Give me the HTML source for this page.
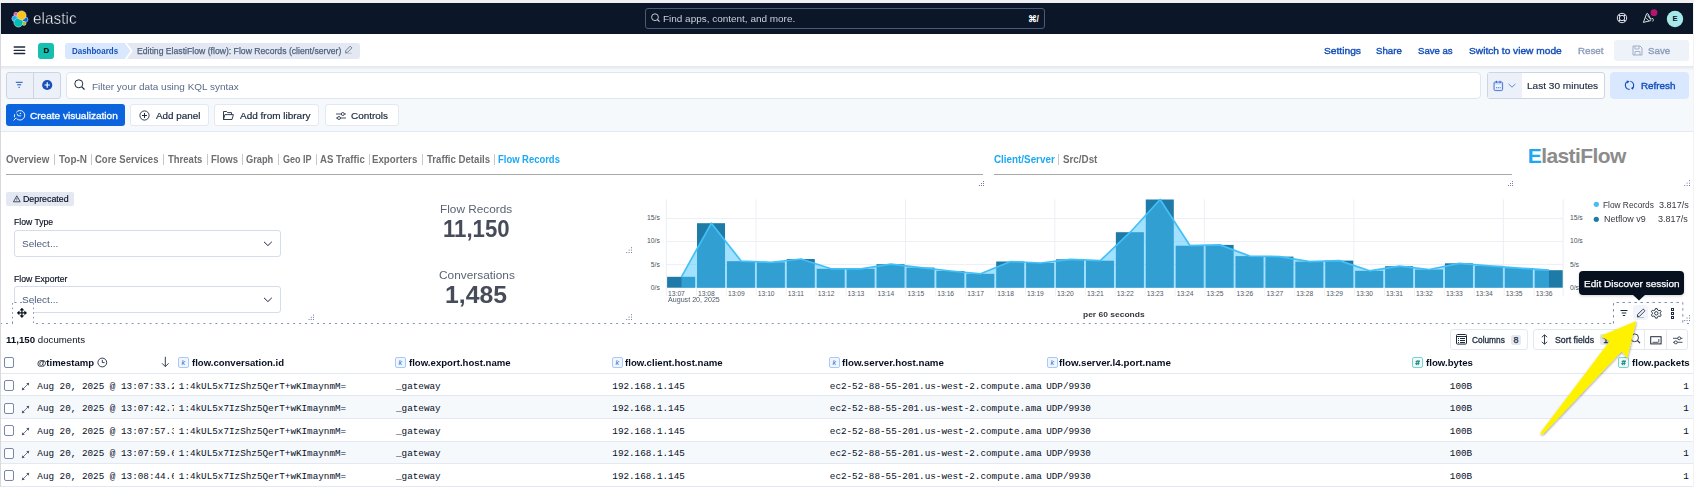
<!DOCTYPE html>
<html><head><meta charset="utf-8">
<style>
*{box-sizing:border-box;margin:0;padding:0}
html,body{width:1694px;height:487px;overflow:hidden;background:#fff;font-family:"Liberation Sans",sans-serif;color:#07101f;position:relative}
.a{position:absolute;white-space:nowrap}
</style></head><body>
<div class="a" style="left:0.00px;top:0.00px;width:1694.00px;height:487.00px;background:#fff"></div>
<div class="a" style="left:0.00px;top:0.00px;width:1694.00px;height:3.00px;background:#f0f0f3"></div>
<div class="a" style="left:1.00px;top:3.00px;width:1692.00px;height:31.00px;background:#0b1628"></div>
<svg class="a" style="left:0px;top:0px;overflow:visible" width="40" height="40" viewBox="0 0 40 40">
<g stroke="#e6ebf2" stroke-width=".55">
<circle cx="15.9" cy="14.3" r="2" fill="#f04e98"/>
<circle cx="14.8" cy="18.6" r="2.9" fill="#1ba9f5"/>
<circle cx="25.1" cy="19.6" r="2.8" fill="#0b64dd"/>
<circle cx="24" cy="23.4" r="2" fill="#93c90e"/>
<circle cx="18.4" cy="22.5" r="4.5" fill="#00bfb3"/>
<circle cx="21.6" cy="15.4" r="4.5" fill="#fec514"/></g></svg>
<div class="a" id="t1" style="left:32.68px;top:10.43px;font-size:16.5px;line-height:16.5px;color:#fff;font-weight:normal;font-family:'Liberation Sans';transform:scaleX(0.9318);transform-origin:0 0;-webkit-text-stroke:0.45px #0b1628">elastic</div>
<div class="a" style="left:645.00px;top:8.00px;width:400.00px;height:21.00px;border:1px solid #4b5a77;border-radius:3px;background:#0b1628"></div>
<svg class="a" style="left:650.5px;top:13px;overflow:visible" width="10" height="10" viewBox="0 0 10 10"><circle cx="4" cy="4.2" r="3.4" fill="none" stroke="#dfe5ef" stroke-width=".85"/><path d="M6.5 6.7 L8.5 8.7" stroke="#dfe5ef" stroke-width="1.1"/></svg>
<div class="a" id="t2" style="left:662.91px;top:13.67px;font-size:9.6px;line-height:9.6px;color:#c8d0dc;font-weight:normal;font-family:'Liberation Sans';transform:scaleX(1.0371);transform-origin:0 0">Find apps, content, and more.</div>
<div class="a" style="left:1027.50px;top:15.20px;font-size:8.5px;line-height:8.5px;color:#fff;font-weight:bold;font-family:'Liberation Sans'">&#8984;/</div>
<svg class="a" style="left:1616px;top:12.4px;overflow:visible" width="12" height="12" viewBox="0 0 12 12"><circle cx="6" cy="6" r="4.7" fill="none" stroke="#e8ecf2" stroke-width=".95"/><circle cx="6" cy="6" r="2.7" fill="none" stroke="#e8ecf2" stroke-width=".95"/><path d="M2.6 2.6L4.1 4.1M9.4 2.6L7.9 4.1M2.6 9.4L4.1 7.9M9.4 9.4L7.9 7.9" stroke="#e8ecf2" stroke-width="1.3"/></svg>
<svg class="a" style="left:1640px;top:10px;overflow:visible" width="16" height="16" viewBox="0 0 16 16"><path d="M3.4 12.4 L6.6 3.8 Q7.3 3 8 3.9 L10.9 9.6 Q11.2 10.4 10.4 10.7 Z" fill="none" stroke="#e8ecf2" stroke-width=".95" stroke-linejoin="round"/><path d="M5.3 7.6 L9.2 11 M7.4 5.5 L10.2 8.8" stroke="#e8ecf2" stroke-width=".8"/><path d="M11.5 8.4 Q13.2 8 13.3 9.6 Q13.4 11 12.6 11.5" fill="none" stroke="#e8ecf2" stroke-width=".9"/></svg>
<svg class="a" style="left:1650px;top:9px;overflow:visible" width="8" height="8" viewBox="0 0 8 8"><circle cx="4" cy="3.7" r="3.4" fill="#b3166f"/></svg>
<svg class="a" style="left:1666px;top:10px;overflow:visible" width="18" height="18" viewBox="0 0 18 18"><circle cx="9" cy="9" r="8.2" fill="#a6e9e8"/></svg>
<div class="a" style="left:1672.60px;top:15.27px;font-size:7.6px;line-height:7.6px;color:#07101f;font-weight:bold;font-family:'Liberation Sans'">E</div>
<div class="a" style="left:1.00px;top:34.00px;width:1692.00px;height:32.00px;background:#fff"></div>
<div class="a" style="left:1.00px;top:66.00px;width:1692.00px;height:1.00px;background:#e3e8f2"></div>
<svg class="a" style="left:0px;top:0px;overflow:visible" width="40" height="70" viewBox="0 0 40 70"><path d="M14.2 47H24.7M14.2 50.4H24.7M14.2 53.5H24.7" stroke="#1d2a3e" stroke-width="1.3" stroke-linecap="round"/></svg>
<div class="a" style="left:38.00px;top:43.00px;width:16.00px;height:16.00px;background:#17bfb0;border-radius:3px"></div>
<div class="a" style="left:43.40px;top:47.13px;font-size:8px;line-height:8px;color:#000;font-weight:bold;font-family:'Liberation Sans'">D</div>
<svg class="a" style="left:65px;top:43px;overflow:visible" width="296" height="16" viewBox="0 0 296 16"><path d="M3 0 H59.7 L65.6 8 L59.7 16 H3 Q0 16 0 13 V3 Q0 0 3 0Z" fill="#d9e8ff"/><path d="M61.8 0 H292 Q295 0 295 3 V13 Q295 16 292 16 H61.8 L67.7 8 Z" fill="#e3e8f2"/></svg>
<div class="a" id="t3" style="left:72.34px;top:46.51px;font-size:9.2px;line-height:9.2px;color:#1750ba;font-weight:bold;font-family:'Liberation Sans';transform:scaleX(0.8676);transform-origin:0 0">Dashboards</div>
<div class="a" id="t4" style="left:136.81px;top:46.51px;font-size:9.2px;line-height:9.2px;color:#4d5f7e;font-weight:normal;font-family:'Liberation Sans';transform:scaleX(0.9415);transform-origin:0 0;-webkit-text-stroke:0.25px #4d5f7e">Editing ElastiFlow (flow): Flow Records (client/server)</div>
<svg class="a" style="left:344px;top:45px;overflow:visible" width="9" height="9" viewBox="0 0 9 9"><path d="M1.5 7.5 L1.8 5.6 L6.2 1.2 L7.9 2.9 L3.5 7.3 Z" fill="none" stroke="#516381" stroke-width=".8"/><path d="M1 8.3 H7.5" stroke="#98a2b3" stroke-width=".6"/></svg>
<div class="a" id="t5" style="left:1323.68px;top:45.87px;font-size:9.6px;line-height:9.6px;color:#1750ba;font-weight:normal;font-family:'Liberation Sans';transform:scaleX(1.0666);transform-origin:0 0;-webkit-text-stroke:0.4px #1750ba">Settings</div>
<div class="a" id="t6" style="left:1376.45px;top:45.87px;font-size:9.6px;line-height:9.6px;color:#1750ba;font-weight:normal;font-family:'Liberation Sans';transform:scaleX(1.0065);transform-origin:0 0;-webkit-text-stroke:0.4px #1750ba">Share</div>
<div class="a" id="t7" style="left:1418.27px;top:45.87px;font-size:9.6px;line-height:9.6px;color:#1750ba;font-weight:normal;font-family:'Liberation Sans';transform:scaleX(0.9991);transform-origin:0 0;-webkit-text-stroke:0.4px #1750ba">Save as</div>
<div class="a" id="t8" style="left:1469.47px;top:45.87px;font-size:9.6px;line-height:9.6px;color:#1750ba;font-weight:normal;font-family:'Liberation Sans';transform:scaleX(1.0607);transform-origin:0 0;-webkit-text-stroke:0.4px #1750ba">Switch to view mode</div>
<div class="a" id="t9" style="left:1577.63px;top:45.87px;font-size:9.6px;line-height:9.6px;color:#8e9fbc;font-weight:normal;font-family:'Liberation Sans';transform:scaleX(1.0175);transform-origin:0 0;-webkit-text-stroke:0.4px #8e9fbc">Reset</div>
<div class="a" style="left:1614.00px;top:40.00px;width:75.00px;height:21.00px;background:#eef2f9;border-radius:3px"></div>
<svg class="a" style="left:1632px;top:45px;overflow:visible" width="11" height="11" viewBox="0 0 11 11"><path d="M1 1 H8 L10 3 V10 H1 Z" fill="none" stroke="#a2afc6" stroke-width="1"/><path d="M3 1 V4 H7 V1 M3 10 V6.5 H8 V10" fill="none" stroke="#a2afc6" stroke-width=".9"/></svg>
<div class="a" id="t10" style="left:1647.98px;top:45.87px;font-size:9.6px;line-height:9.6px;color:#8e9fbc;font-weight:normal;font-family:'Liberation Sans';transform:scaleX(1.0150);transform-origin:0 0;-webkit-text-stroke:0.4px #8e9fbc">Save</div>
<div class="a" style="left:1.00px;top:67.00px;width:1692.00px;height:65.00px;background:#f6f9fc"></div>
<div class="a" style="left:1.00px;top:131.00px;width:1692.00px;height:1.00px;background:#e3e8f2"></div>
<div class="a" style="left:1.00px;top:67.00px;width:1692.00px;height:3.00px;background:linear-gradient(#e6e8ec,#f6f9fc)"></div>
<div class="a" style="left:6.00px;top:72.00px;width:55.00px;height:27.00px;background:#ecf0f8;border:1px solid #cdd5e4;border-radius:3px"></div>
<div class="a" style="left:33.00px;top:73.00px;width:1.00px;height:25.00px;background:#cdd5e4"></div>
<svg class="a" style="left:15px;top:81px;overflow:visible" width="9" height="8" viewBox="0 0 9 8"><path d="M0.8 1.3H7.6M2.2 3.8H6.2M3.5 6.3H4.9" stroke="#1750ba" stroke-width="1"/></svg>
<svg class="a" style="left:41.5px;top:80px;overflow:visible" width="11" height="11" viewBox="0 0 11 11"><circle cx="5.2" cy="5" r="5.1" fill="#1750ba"/><path d="M5.2 2.3V7.7M2.5 5H7.9" stroke="#fff" stroke-width="1.2"/></svg>
<div class="a" style="left:66.00px;top:72.00px;width:1415.00px;height:27.00px;background:#fff;border:1px solid #e0e6f0;border-radius:4px"></div>
<svg class="a" style="left:73.5px;top:79px;overflow:visible" width="12" height="12" viewBox="0 0 12 12"><circle cx="4.8" cy="4.8" r="4" fill="none" stroke="#1d2a3e" stroke-width="1"/><path d="M7.8 7.8 L10.5 10.5" stroke="#1d2a3e" stroke-width="1.2"/></svg>
<div class="a" id="t11" style="left:91.72px;top:81.70px;font-size:9.8px;line-height:9.8px;color:#5a6b87;font-weight:normal;font-family:'Liberation Sans';transform:scaleX(1.0155);transform-origin:0 0">Filter your data using KQL syntax</div>
<div class="a" style="left:1487.00px;top:72.00px;width:118.00px;height:27.00px;background:#fff;border:1px solid #cdd5e4;border-radius:3px"></div>
<div class="a" style="left:1488.00px;top:73.00px;width:34.00px;height:25.00px;background:#ecf0f8"></div>
<svg class="a" style="left:1492px;top:79px;overflow:visible" width="12" height="13" viewBox="0 0 12 13"><rect x="2" y="3" width="8.6" height="8.6" rx="1.2" fill="#c9d8f4" stroke="#3b6fd0" stroke-width=".9"/><rect x="3" y="5.6" width="6.6" height="5" fill="#f0f4fb"/><path d="M4.4 1.8V4M8.1 1.8V4" stroke="#3b6fd0" stroke-width="1.1"/><path d="M4 8.8h1.1M5.8 8.8h1.1M7.6 8.8h1.1" stroke="#3b6fd0" stroke-width="1.1"/></svg>
<svg class="a" style="left:1507.5px;top:83px;overflow:visible" width="9" height="6" viewBox="0 0 9 6"><path d="M.6 1 L4 4.2 L7.4 1" fill="none" stroke="#3a6fd0" stroke-width=".8"/></svg>
<div class="a" id="t12" style="left:1527.30px;top:80.90px;font-size:9.8px;line-height:9.8px;color:#1d2a3e;font-weight:normal;font-family:'Liberation Sans';transform:scaleX(1.0281);transform-origin:0 0;-webkit-text-stroke:0.15px #1d2a3e">Last 30 minutes</div>
<div class="a" style="left:1610.00px;top:72.00px;width:79.00px;height:27.00px;background:#d9e8ff;border-radius:4px"></div>
<svg class="a" style="left:1624px;top:80px;overflow:visible" width="12" height="12" viewBox="0 0 12 12"><path d="M4.6 1.3 A4.1 4.1 0 0 0 5.6 9.4" fill="none" stroke="#1750ba" stroke-width="1.15"/><path d="M6.4 1.2 A4.1 4.1 0 0 1 8.2 8.4" fill="none" stroke="#1750ba" stroke-width="1.15" stroke-dasharray="0"/><path d="M2.6 .6L5.6 1.3 3.3 3.4Z M9.9 6.9L8.9 9.7 6.8 7.9Z" fill="#1750ba"/></svg>
<div class="a" id="t13" style="left:1640.54px;top:80.90px;font-size:9.8px;line-height:9.8px;color:#1750ba;font-weight:normal;font-family:'Liberation Sans';transform:scaleX(1.0051);transform-origin:0 0;-webkit-text-stroke:0.4px #1750ba">Refresh</div>
<div class="a" style="left:6.00px;top:104.00px;width:119.00px;height:22.00px;background:#0b64dd;border-radius:3px"></div>
<svg class="a" style="left:11.8px;top:109px;overflow:visible" width="14" height="14" viewBox="0 0 14 14"><path d="M4.3 3.3 A4.75 4.75 0 1 1 4.6 9.6" fill="none" stroke="#fff" stroke-width=".9"/><path d="M4.9 4.6 Q5.2 7.6 8.3 6.9 L9.2 6.3" fill="none" stroke="#fff" stroke-width=".9"/><path d="M1.5 11.5 L4.2 8.8 M2.6 5.2 L2.4 8.3" stroke="#fff" stroke-width=".9"/><circle cx="8.4" cy="4.4" r=".7" fill="#fff"/></svg>
<div class="a" id="t14" style="left:29.73px;top:111.10px;font-size:9.8px;line-height:9.8px;color:#fff;font-weight:normal;font-family:'Liberation Sans';transform:scaleX(1.0260);transform-origin:0 0;-webkit-text-stroke:0.3px #fff">Create visualization</div>
<div class="a" style="left:130.00px;top:104.00px;width:79.00px;height:22.00px;background:#fff;border:1px solid #e3e8f2;border-radius:3px"></div>
<div class="a" id="t15" style="left:155.66px;top:111.10px;font-size:9.8px;line-height:9.8px;color:#1d2a3e;font-weight:normal;font-family:'Liberation Sans';transform:scaleX(1.0045);transform-origin:0 0;-webkit-text-stroke:0.2px #1d2a3e">Add panel</div>
<div class="a" style="left:214.00px;top:104.00px;width:105.00px;height:22.00px;background:#fff;border:1px solid #e3e8f2;border-radius:3px"></div>
<div class="a" id="t16" style="left:239.74px;top:111.10px;font-size:9.8px;line-height:9.8px;color:#1d2a3e;font-weight:normal;font-family:'Liberation Sans';transform:scaleX(1.0192);transform-origin:0 0;-webkit-text-stroke:0.2px #1d2a3e">Add from library</div>
<div class="a" style="left:325.00px;top:104.00px;width:74.00px;height:22.00px;background:#fff;border:1px solid #e3e8f2;border-radius:3px"></div>
<div class="a" id="t17" style="left:351.30px;top:111.10px;font-size:9.8px;line-height:9.8px;color:#1d2a3e;font-weight:normal;font-family:'Liberation Sans';transform:scaleX(1.0123);transform-origin:0 0;-webkit-text-stroke:0.2px #1d2a3e">Controls</div>
<svg class="a" style="left:139px;top:110px;overflow:visible" width="11" height="11" viewBox="0 0 11 11"><circle cx="5.5" cy="5.5" r="4.6" fill="none" stroke="#1d2a3e" stroke-width=".9"/><path d="M5.5 3V8M3 5.5H8" stroke="#1d2a3e" stroke-width="1"/></svg>
<svg class="a" style="left:222px;top:109.5px;overflow:visible" width="13" height="12" viewBox="0 0 13 12"><path d="M1.5 9.5 V1.5 H4.6 L5.6 2.6 H9.5 V4.6" fill="none" stroke="#1d2a3e" stroke-width=".9" stroke-linejoin="round"/><path d="M1.5 9.5 L2.9 4.6 H11.4 L10 9.5 Z" fill="none" stroke="#1d2a3e" stroke-width=".9" stroke-linejoin="round"/></svg>
<svg class="a" style="left:334.5px;top:110.5px;overflow:visible" width="12" height="10" viewBox="0 0 12 10"><path d="M1 3 H11 M1 7 H11" stroke="#1d2a3e" stroke-width=".8"/><circle cx="7.8" cy="3" r="1.5" fill="#fff" stroke="#1d2a3e" stroke-width=".8"/><circle cx="4" cy="7" r="1.5" fill="#fff" stroke="#1d2a3e" stroke-width=".8"/></svg>
<div class="a" id="t18" style="left:6.36px;top:154.84px;font-size:10px;line-height:10px;color:#6e6f73;font-weight:bold;font-family:'Liberation Sans';transform:scaleX(0.9719);transform-origin:0 0">Overview</div>
<div class="a" style="left:54.00px;top:154.00px;width:1.00px;height:11.00px;background:#c8c8c8"></div>
<div class="a" id="t19" style="left:58.79px;top:154.84px;font-size:10px;line-height:10px;color:#6e6f73;font-weight:bold;font-family:'Liberation Sans';transform:scaleX(0.9943);transform-origin:0 0">Top-N</div>
<div class="a" style="left:91.00px;top:154.00px;width:1.00px;height:11.00px;background:#c8c8c8"></div>
<div class="a" id="t20" style="left:95.25px;top:154.84px;font-size:10px;line-height:10px;color:#6e6f73;font-weight:bold;font-family:'Liberation Sans';transform:scaleX(0.9506);transform-origin:0 0">Core Services</div>
<div class="a" style="left:163.00px;top:154.00px;width:1.00px;height:11.00px;background:#c8c8c8"></div>
<div class="a" id="t21" style="left:167.91px;top:154.84px;font-size:10px;line-height:10px;color:#6e6f73;font-weight:bold;font-family:'Liberation Sans';transform:scaleX(0.9509);transform-origin:0 0">Threats</div>
<div class="a" style="left:207.00px;top:154.00px;width:1.00px;height:11.00px;background:#c8c8c8"></div>
<div class="a" id="t22" style="left:210.70px;top:154.84px;font-size:10px;line-height:10px;color:#6e6f73;font-weight:bold;font-family:'Liberation Sans';transform:scaleX(0.9511);transform-origin:0 0">Flows</div>
<div class="a" style="left:242.00px;top:154.00px;width:1.00px;height:11.00px;background:#c8c8c8"></div>
<div class="a" id="t23" style="left:246.21px;top:154.84px;font-size:10px;line-height:10px;color:#6e6f73;font-weight:bold;font-family:'Liberation Sans';transform:scaleX(0.9263);transform-origin:0 0">Graph</div>
<div class="a" style="left:278.00px;top:154.00px;width:1.00px;height:11.00px;background:#c8c8c8"></div>
<div class="a" id="t24" style="left:282.59px;top:154.84px;font-size:10px;line-height:10px;color:#6e6f73;font-weight:bold;font-family:'Liberation Sans';transform:scaleX(0.9048);transform-origin:0 0">Geo IP</div>
<div class="a" style="left:316.00px;top:154.00px;width:1.00px;height:11.00px;background:#c8c8c8"></div>
<div class="a" id="t25" style="left:320.08px;top:154.84px;font-size:10px;line-height:10px;color:#6e6f73;font-weight:bold;font-family:'Liberation Sans';transform:scaleX(0.9584);transform-origin:0 0">AS Traffic</div>
<div class="a" style="left:369.00px;top:154.00px;width:1.00px;height:11.00px;background:#c8c8c8"></div>
<div class="a" id="t26" style="left:372.49px;top:154.84px;font-size:10px;line-height:10px;color:#6e6f73;font-weight:bold;font-family:'Liberation Sans';transform:scaleX(0.9697);transform-origin:0 0">Exporters</div>
<div class="a" style="left:422.00px;top:154.00px;width:1.00px;height:11.00px;background:#c8c8c8"></div>
<div class="a" id="t27" style="left:426.71px;top:154.84px;font-size:10px;line-height:10px;color:#6e6f73;font-weight:bold;font-family:'Liberation Sans';transform:scaleX(0.9625);transform-origin:0 0">Traffic Details</div>
<div class="a" style="left:494.00px;top:154.00px;width:1.00px;height:11.00px;background:#c8c8c8"></div>
<div class="a" id="t28" style="left:497.78px;top:154.84px;font-size:10px;line-height:10px;color:#1ba9f5;font-weight:bold;font-family:'Liberation Sans';transform:scaleX(0.9437);transform-origin:0 0">Flow Records</div>
<div class="a" style="left:6.00px;top:174.00px;width:977.00px;height:1.00px;background:#a9a9a9"></div>
<div class="a" id="t29" style="left:993.72px;top:154.84px;font-size:10px;line-height:10px;color:#1ba9f5;font-weight:bold;font-family:'Liberation Sans';transform:scaleX(0.9845);transform-origin:0 0">Client/Server</div>
<div class="a" style="left:1058.00px;top:154.00px;width:1.00px;height:11.00px;background:#c8c8c8"></div>
<div class="a" id="t30" style="left:1063.21px;top:154.84px;font-size:10px;line-height:10px;color:#6e6f73;font-weight:bold;font-family:'Liberation Sans';transform:scaleX(0.9818);transform-origin:0 0">Src/Dst</div>
<div class="a" style="left:994.00px;top:174.00px;width:518.00px;height:1.00px;background:#a9a9a9"></div>
<div class="a" style="left:1527.8px;top:144px;font-size:21px;line-height:24px;font-weight:bold;color:#8c8c8c;letter-spacing:-0.6px"><span style="color:#1ba9f5">E</span>lastiFlow</div>
<svg class="a" style="left:0;top:0" width="1694" height="487"><rect x="983.00" y="185.00" width="1" height="1" fill="#6f7fa3"/><rect x="981.00" y="185.00" width="1" height="1" fill="#6f7fa3"/><rect x="979.00" y="185.00" width="1" height="1" fill="#6f7fa3"/><rect x="983.00" y="183.00" width="1" height="1" fill="#6f7fa3"/><rect x="981.00" y="183.00" width="1" height="1" fill="#6f7fa3"/><rect x="983.00" y="181.00" width="1" height="1" fill="#6f7fa3"/></svg>
<svg class="a" style="left:0;top:0" width="1694" height="487"><rect x="1512.00" y="185.00" width="1" height="1" fill="#6f7fa3"/><rect x="1510.00" y="185.00" width="1" height="1" fill="#6f7fa3"/><rect x="1508.00" y="185.00" width="1" height="1" fill="#6f7fa3"/><rect x="1512.00" y="183.00" width="1" height="1" fill="#6f7fa3"/><rect x="1510.00" y="183.00" width="1" height="1" fill="#6f7fa3"/><rect x="1512.00" y="181.00" width="1" height="1" fill="#6f7fa3"/></svg>
<svg class="a" style="left:0;top:0" width="1694" height="487"><rect x="1689.00" y="185.00" width="1" height="1" fill="#6f7fa3"/><rect x="1686.60" y="185.00" width="1" height="1" fill="#6f7fa3"/><rect x="1684.20" y="185.00" width="1" height="1" fill="#6f7fa3"/><rect x="1689.00" y="182.60" width="1" height="1" fill="#6f7fa3"/><rect x="1686.60" y="182.60" width="1" height="1" fill="#6f7fa3"/><rect x="1689.00" y="180.20" width="1" height="1" fill="#6f7fa3"/></svg>
<svg class="a" style="left:0;top:0" width="1694" height="487"><rect x="631.00" y="252.00" width="1" height="1" fill="#6f7fa3"/><rect x="628.60" y="252.00" width="1" height="1" fill="#6f7fa3"/><rect x="626.20" y="252.00" width="1" height="1" fill="#6f7fa3"/><rect x="631.00" y="249.60" width="1" height="1" fill="#6f7fa3"/><rect x="628.60" y="249.60" width="1" height="1" fill="#6f7fa3"/><rect x="631.00" y="247.20" width="1" height="1" fill="#6f7fa3"/></svg>
<svg class="a" style="left:0;top:0" width="1694" height="487"><rect x="631.00" y="319.00" width="1" height="1" fill="#6f7fa3"/><rect x="628.60" y="319.00" width="1" height="1" fill="#6f7fa3"/><rect x="626.20" y="319.00" width="1" height="1" fill="#6f7fa3"/><rect x="631.00" y="316.60" width="1" height="1" fill="#6f7fa3"/><rect x="628.60" y="316.60" width="1" height="1" fill="#6f7fa3"/><rect x="631.00" y="314.20" width="1" height="1" fill="#6f7fa3"/></svg>
<svg class="a" style="left:0;top:0" width="1694" height="487"><rect x="313.00" y="319.00" width="1" height="1" fill="#6f7fa3"/><rect x="310.80" y="319.00" width="1" height="1" fill="#6f7fa3"/><rect x="308.60" y="319.00" width="1" height="1" fill="#6f7fa3"/><rect x="313.00" y="316.80" width="1" height="1" fill="#6f7fa3"/><rect x="310.80" y="316.80" width="1" height="1" fill="#6f7fa3"/><rect x="313.00" y="314.60" width="1" height="1" fill="#6f7fa3"/></svg>
<svg class="a" style="left:0;top:0" width="1694" height="487"><rect x="1689.00" y="320.00" width="1" height="1" fill="#6f7fa3"/><rect x="1686.60" y="320.00" width="1" height="1" fill="#6f7fa3"/><rect x="1684.20" y="320.00" width="1" height="1" fill="#6f7fa3"/><rect x="1689.00" y="317.60" width="1" height="1" fill="#6f7fa3"/><rect x="1686.60" y="317.60" width="1" height="1" fill="#6f7fa3"/><rect x="1689.00" y="315.20" width="1" height="1" fill="#6f7fa3"/></svg>
<div class="a" style="left:6.00px;top:192.00px;width:68.00px;height:14.00px;background:#e3e8f2;border-radius:2px"></div>
<svg class="a" style="left:13px;top:195px;overflow:visible" width="8" height="8" viewBox="0 0 8 8"><path d="M3.8 .8 L7.2 6.8 H.5 Z" fill="none" stroke="#07101f" stroke-width=".7"/><path d="M3.85 3V4.8M3.85 5.5V6" stroke="#07101f" stroke-width=".6"/></svg>
<div class="a" id="t31" style="left:22.50px;top:194.72px;font-size:8.6px;line-height:8.6px;color:#07101f;font-weight:normal;font-family:'Liberation Sans';transform:scaleX(1.0263);transform-origin:0 0;-webkit-text-stroke:0.15px #07101f">Deprecated</div>
<div class="a" id="t32" style="left:14.33px;top:218.29px;font-size:8.4px;line-height:8.4px;color:#07101f;font-weight:normal;font-family:'Liberation Sans';transform:scaleX(1.0293);transform-origin:0 0;-webkit-text-stroke:0.15px #07101f">Flow Type</div>
<div class="a" id="t33" style="left:14.14px;top:274.69px;font-size:8.4px;line-height:8.4px;color:#07101f;font-weight:normal;font-family:'Liberation Sans';transform:scaleX(1.0355);transform-origin:0 0;-webkit-text-stroke:0.15px #07101f">Flow Exporter</div>
<div class="a" style="left:14.00px;top:230.00px;width:267.00px;height:27.00px;background:#fff;border:1px solid #d5dcea;border-radius:3px"></div>
<div class="a" id="t34" style="left:22.05px;top:238.70px;font-size:9.8px;line-height:9.8px;color:#4a5b7c;font-weight:normal;font-family:'Liberation Sans';transform:scaleX(1.0246);transform-origin:0 0">Select...</div>
<svg class="a" style="left:262.5px;top:240.5px;overflow:visible" width="10" height="6" viewBox="0 0 10 6"><path d="M1 .8 L4.9 4.6 L8.8 .8" fill="none" stroke="#1d2a3e" stroke-width="1"/></svg>
<div class="a" style="left:14.00px;top:286.00px;width:267.00px;height:27.00px;background:#fff;border:1px solid #d5dcea;border-radius:3px"></div>
<div class="a" id="t35" style="left:22.05px;top:294.70px;font-size:9.8px;line-height:9.8px;color:#4a5b7c;font-weight:normal;font-family:'Liberation Sans';transform:scaleX(1.0246);transform-origin:0 0">Select...</div>
<svg class="a" style="left:262.5px;top:296.5px;overflow:visible" width="10" height="6" viewBox="0 0 10 6"><path d="M1 .8 L4.9 4.6 L8.8 .8" fill="none" stroke="#1d2a3e" stroke-width="1"/></svg>
<svg class="a" style="left:0;top:323px" width="1694" height="1"><line x1="0.03" y1="0.5" x2="1694" y2="0.5" stroke="#8293b8" stroke-width="1" stroke-dasharray="2 3.982"/></svg>
<svg class="a" style="left:12px;top:302px" width="22" height="22"><rect x="1" y="1" width="21" height="21" fill="#fff"/><path d="M.5 21 V.5" stroke="#8293b8" stroke-width="1" stroke-dasharray="1.6 3"/><path d="M21.5 21 V.5" stroke="#8293b8" stroke-width="1" stroke-dasharray="1.6 3"/><path d="M.5 .5 H21.5" stroke="#8293b8" stroke-width="1" stroke-dasharray="2 3.5" stroke-dashoffset="-2"/></svg>
<svg class="a" style="left:17.4px;top:308.3px;overflow:visible" width="10" height="10" viewBox="0 0 10 10"><path d="M4.9 1V8.8M1 4.9H8.8" stroke="#07101f" stroke-width="1.2"/><path d="M3.1 2.2L4.9 .1 6.7 2.2Z M3.1 7.6L4.9 9.7 6.7 7.6Z M2.2 3.1L.1 4.9 2.2 6.7Z M7.6 3.1L9.7 4.9 7.6 6.7Z" fill="#07101f" stroke="#07101f" stroke-width=".5" stroke-linejoin="round"/></svg>
<div class="a" id="t36" style="left:439.89px;top:203.73px;font-size:10.6px;line-height:10.6px;color:#5a6473;font-weight:normal;font-family:'Liberation Sans';transform:scaleX(1.1131);transform-origin:0 0">Flow Records</div>
<div class="a" id="t37" style="left:442.88px;top:216.78px;font-size:24.6px;line-height:24.6px;color:#464c59;font-weight:bold;font-family:'Liberation Sans';transform:scaleX(0.9011);transform-origin:0 0">11,150</div>
<div class="a" id="t38" style="left:438.75px;top:270.03px;font-size:10.6px;line-height:10.6px;color:#5a6473;font-weight:normal;font-family:'Liberation Sans';transform:scaleX(1.1195);transform-origin:0 0">Conversations</div>
<div class="a" id="t39" style="left:445.13px;top:283.48px;font-size:24.6px;line-height:24.6px;color:#464c59;font-weight:bold;font-family:'Liberation Sans';transform:scaleX(1.0073);transform-origin:0 0">1,485</div>
<svg class="a" style="left:0px;top:0px;overflow:visible" width="1694" height="487" viewBox="0 0 1694 487"><line x1="666.5" y1="218.5" x2="1563" y2="218.5" stroke="#eceff3" stroke-width="1"/><line x1="666.5" y1="241.5" x2="1563" y2="241.5" stroke="#eceff3" stroke-width="1"/><line x1="666.5" y1="264.6" x2="1563" y2="264.6" stroke="#eceff3" stroke-width="1"/><line x1="756.00" y1="199.3" x2="756.00" y2="287.7" stroke="#eceff3" stroke-width="1"/><line x1="905.46" y1="199.3" x2="905.46" y2="287.7" stroke="#eceff3" stroke-width="1"/><line x1="1054.92" y1="199.3" x2="1054.92" y2="287.7" stroke="#eceff3" stroke-width="1"/><line x1="1204.38" y1="199.3" x2="1204.38" y2="287.7" stroke="#eceff3" stroke-width="1"/><line x1="1353.84" y1="199.3" x2="1353.84" y2="287.7" stroke="#eceff3" stroke-width="1"/><line x1="1503.30" y1="199.3" x2="1503.30" y2="287.7" stroke="#eceff3" stroke-width="1"/><line x1="666.3" y1="199.3" x2="666.3" y2="296" stroke="#e9edf3" stroke-width="1"/><line x1="1563.1" y1="199.3" x2="1563.1" y2="296" stroke="#e9edf3" stroke-width="1"/><line x1="666.50" y1="287.7" x2="666.50" y2="295.6" stroke="#eef1f5" stroke-width="1"/><line x1="696.42" y1="287.7" x2="696.42" y2="295.6" stroke="#eef1f5" stroke-width="1"/><line x1="726.33" y1="287.7" x2="726.33" y2="295.6" stroke="#eef1f5" stroke-width="1"/><line x1="756.25" y1="287.7" x2="756.25" y2="295.6" stroke="#eef1f5" stroke-width="1"/><line x1="786.17" y1="287.7" x2="786.17" y2="295.6" stroke="#eef1f5" stroke-width="1"/><line x1="816.09" y1="287.7" x2="816.09" y2="295.6" stroke="#eef1f5" stroke-width="1"/><line x1="846.00" y1="287.7" x2="846.00" y2="295.6" stroke="#eef1f5" stroke-width="1"/><line x1="875.92" y1="287.7" x2="875.92" y2="295.6" stroke="#eef1f5" stroke-width="1"/><line x1="905.84" y1="287.7" x2="905.84" y2="295.6" stroke="#eef1f5" stroke-width="1"/><line x1="935.75" y1="287.7" x2="935.75" y2="295.6" stroke="#eef1f5" stroke-width="1"/><line x1="965.67" y1="287.7" x2="965.67" y2="295.6" stroke="#eef1f5" stroke-width="1"/><line x1="995.59" y1="287.7" x2="995.59" y2="295.6" stroke="#eef1f5" stroke-width="1"/><line x1="1025.50" y1="287.7" x2="1025.50" y2="295.6" stroke="#eef1f5" stroke-width="1"/><line x1="1055.42" y1="287.7" x2="1055.42" y2="295.6" stroke="#eef1f5" stroke-width="1"/><line x1="1085.34" y1="287.7" x2="1085.34" y2="295.6" stroke="#eef1f5" stroke-width="1"/><line x1="1115.26" y1="287.7" x2="1115.26" y2="295.6" stroke="#eef1f5" stroke-width="1"/><line x1="1145.17" y1="287.7" x2="1145.17" y2="295.6" stroke="#eef1f5" stroke-width="1"/><line x1="1175.09" y1="287.7" x2="1175.09" y2="295.6" stroke="#eef1f5" stroke-width="1"/><line x1="1205.01" y1="287.7" x2="1205.01" y2="295.6" stroke="#eef1f5" stroke-width="1"/><line x1="1234.92" y1="287.7" x2="1234.92" y2="295.6" stroke="#eef1f5" stroke-width="1"/><line x1="1264.84" y1="287.7" x2="1264.84" y2="295.6" stroke="#eef1f5" stroke-width="1"/><line x1="1294.76" y1="287.7" x2="1294.76" y2="295.6" stroke="#eef1f5" stroke-width="1"/><line x1="1324.67" y1="287.7" x2="1324.67" y2="295.6" stroke="#eef1f5" stroke-width="1"/><line x1="1354.59" y1="287.7" x2="1354.59" y2="295.6" stroke="#eef1f5" stroke-width="1"/><line x1="1384.51" y1="287.7" x2="1384.51" y2="295.6" stroke="#eef1f5" stroke-width="1"/><line x1="1414.43" y1="287.7" x2="1414.43" y2="295.6" stroke="#eef1f5" stroke-width="1"/><line x1="1444.34" y1="287.7" x2="1444.34" y2="295.6" stroke="#eef1f5" stroke-width="1"/><line x1="1474.26" y1="287.7" x2="1474.26" y2="295.6" stroke="#eef1f5" stroke-width="1"/><line x1="1504.18" y1="287.7" x2="1504.18" y2="295.6" stroke="#eef1f5" stroke-width="1"/><line x1="1534.09" y1="287.7" x2="1534.09" y2="295.6" stroke="#eef1f5" stroke-width="1"/><rect x="667.10" y="276.8" width="28.02" height="10.90" fill="#1e7aa6"/><rect x="697.02" y="223.2" width="28.02" height="64.50" fill="#1e7aa6"/><rect x="726.93" y="261.2" width="28.02" height="26.50" fill="#1e7aa6"/><rect x="756.85" y="262.3" width="28.02" height="25.40" fill="#1e7aa6"/><rect x="786.77" y="259.0" width="28.02" height="28.70" fill="#1e7aa6"/><rect x="816.69" y="268.8" width="28.02" height="18.90" fill="#1e7aa6"/><rect x="846.60" y="268.8" width="28.02" height="18.90" fill="#1e7aa6"/><rect x="876.52" y="264.2" width="28.02" height="23.50" fill="#1e7aa6"/><rect x="906.44" y="267.6" width="28.02" height="20.10" fill="#1e7aa6"/><rect x="936.35" y="271.0" width="28.02" height="16.70" fill="#1e7aa6"/><rect x="966.27" y="273.8" width="28.02" height="13.90" fill="#1e7aa6"/><rect x="996.19" y="261.5" width="28.02" height="26.20" fill="#1e7aa6"/><rect x="1026.10" y="263.0" width="28.02" height="24.70" fill="#1e7aa6"/><rect x="1056.02" y="259.3" width="28.02" height="28.40" fill="#1e7aa6"/><rect x="1085.94" y="260.7" width="28.02" height="27.00" fill="#1e7aa6"/><rect x="1115.86" y="232.2" width="28.02" height="55.50" fill="#1e7aa6"/><rect x="1145.77" y="199.5" width="28.02" height="88.20" fill="#1e7aa6"/><rect x="1175.69" y="245.7" width="28.02" height="42.00" fill="#1e7aa6"/><rect x="1205.61" y="244.9" width="28.02" height="42.80" fill="#1e7aa6"/><rect x="1235.52" y="256.1" width="28.02" height="31.60" fill="#1e7aa6"/><rect x="1265.44" y="256.6" width="28.02" height="31.10" fill="#1e7aa6"/><rect x="1295.36" y="261.6" width="28.02" height="26.10" fill="#1e7aa6"/><rect x="1325.27" y="260.6" width="28.02" height="27.10" fill="#1e7aa6"/><rect x="1355.19" y="270.8" width="28.02" height="16.90" fill="#1e7aa6"/><rect x="1385.11" y="266.2" width="28.02" height="21.50" fill="#1e7aa6"/><rect x="1415.03" y="269.5" width="28.02" height="18.20" fill="#1e7aa6"/><rect x="1444.94" y="263.3" width="28.02" height="24.40" fill="#1e7aa6"/><rect x="1474.86" y="265.9" width="28.02" height="21.80" fill="#1e7aa6"/><rect x="1504.78" y="268.1" width="28.02" height="19.60" fill="#1e7aa6"/><rect x="1534.69" y="270.2" width="28.02" height="17.50" fill="#1e7aa6"/><polygon points="681.46,287.7 681.46,276.80 711.38,223.20 741.29,261.20 771.21,262.30 801.13,259.00 831.04,268.80 860.96,268.80 890.88,264.20 920.79,267.60 950.71,271.00 980.63,273.80 1010.55,261.50 1040.46,263.00 1070.38,259.30 1100.30,260.70 1130.21,232.20 1160.13,199.50 1190.05,245.70 1219.96,244.90 1249.88,256.10 1279.80,256.60 1309.72,261.60 1339.63,260.60 1369.55,270.80 1399.47,266.20 1429.38,269.50 1459.30,263.30 1489.22,265.90 1519.13,268.10 1549.05,270.20 1549.05,287.7" fill="#46c4ff" fill-opacity="0.5"/><polyline points="681.46,276.80 711.38,223.20 741.29,261.20 771.21,262.30 801.13,259.00 831.04,268.80 860.96,268.80 890.88,264.20 920.79,267.60 950.71,271.00 980.63,273.80 1010.55,261.50 1040.46,263.00 1070.38,259.30 1100.30,260.70 1130.21,232.20 1160.13,199.50 1190.05,245.70 1219.96,244.90 1249.88,256.10 1279.80,256.60 1309.72,261.60 1339.63,260.60 1369.55,270.80 1399.47,266.20 1429.38,269.50 1459.30,263.30 1489.22,265.90 1519.13,268.10 1549.05,270.20" fill="none" stroke="#42c0f7" stroke-width="1.7" stroke-linejoin="round"/></svg>
<div class="a" style="left:359.80px;top:214.94px;font-size:6.8px;line-height:6.8px;color:#4a5463;font-weight:normal;font-family:'Liberation Sans';width:300px;text-align:right">15/s</div>
<div class="a" style="left:1569.90px;top:214.94px;font-size:6.8px;line-height:6.8px;color:#4a5463;font-weight:normal;font-family:'Liberation Sans'">15/s</div>
<div class="a" style="left:359.80px;top:238.24px;font-size:6.8px;line-height:6.8px;color:#4a5463;font-weight:normal;font-family:'Liberation Sans';width:300px;text-align:right">10/s</div>
<div class="a" style="left:1569.90px;top:238.24px;font-size:6.8px;line-height:6.8px;color:#4a5463;font-weight:normal;font-family:'Liberation Sans'">10/s</div>
<div class="a" style="left:359.80px;top:261.84px;font-size:6.8px;line-height:6.8px;color:#4a5463;font-weight:normal;font-family:'Liberation Sans';width:300px;text-align:right">5/s</div>
<div class="a" style="left:1569.90px;top:261.84px;font-size:6.8px;line-height:6.8px;color:#4a5463;font-weight:normal;font-family:'Liberation Sans'">5/s</div>
<div class="a" style="left:359.80px;top:285.04px;font-size:6.8px;line-height:6.8px;color:#4a5463;font-weight:normal;font-family:'Liberation Sans';width:300px;text-align:right">0/s</div>
<div class="a" style="left:1569.90px;top:285.04px;font-size:6.8px;line-height:6.8px;color:#4a5463;font-weight:normal;font-family:'Liberation Sans'">0/s</div>
<div class="a" style="left:668.10px;top:290.53px;font-size:6.7px;line-height:6.7px;color:#4f5968;font-weight:normal;font-family:'Liberation Sans'">13:07</div>
<div class="a" style="left:698.02px;top:290.53px;font-size:6.7px;line-height:6.7px;color:#4f5968;font-weight:normal;font-family:'Liberation Sans'">13:08</div>
<div class="a" style="left:727.93px;top:290.53px;font-size:6.7px;line-height:6.7px;color:#4f5968;font-weight:normal;font-family:'Liberation Sans'">13:09</div>
<div class="a" style="left:757.85px;top:290.53px;font-size:6.7px;line-height:6.7px;color:#4f5968;font-weight:normal;font-family:'Liberation Sans'">13:10</div>
<div class="a" style="left:787.77px;top:290.53px;font-size:6.7px;line-height:6.7px;color:#4f5968;font-weight:normal;font-family:'Liberation Sans'">13:11</div>
<div class="a" style="left:817.69px;top:290.53px;font-size:6.7px;line-height:6.7px;color:#4f5968;font-weight:normal;font-family:'Liberation Sans'">13:12</div>
<div class="a" style="left:847.60px;top:290.53px;font-size:6.7px;line-height:6.7px;color:#4f5968;font-weight:normal;font-family:'Liberation Sans'">13:13</div>
<div class="a" style="left:877.52px;top:290.53px;font-size:6.7px;line-height:6.7px;color:#4f5968;font-weight:normal;font-family:'Liberation Sans'">13:14</div>
<div class="a" style="left:907.44px;top:290.53px;font-size:6.7px;line-height:6.7px;color:#4f5968;font-weight:normal;font-family:'Liberation Sans'">13:15</div>
<div class="a" style="left:937.35px;top:290.53px;font-size:6.7px;line-height:6.7px;color:#4f5968;font-weight:normal;font-family:'Liberation Sans'">13:16</div>
<div class="a" style="left:967.27px;top:290.53px;font-size:6.7px;line-height:6.7px;color:#4f5968;font-weight:normal;font-family:'Liberation Sans'">13:17</div>
<div class="a" style="left:997.19px;top:290.53px;font-size:6.7px;line-height:6.7px;color:#4f5968;font-weight:normal;font-family:'Liberation Sans'">13:18</div>
<div class="a" style="left:1027.10px;top:290.53px;font-size:6.7px;line-height:6.7px;color:#4f5968;font-weight:normal;font-family:'Liberation Sans'">13:19</div>
<div class="a" style="left:1057.02px;top:290.53px;font-size:6.7px;line-height:6.7px;color:#4f5968;font-weight:normal;font-family:'Liberation Sans'">13:20</div>
<div class="a" style="left:1086.94px;top:290.53px;font-size:6.7px;line-height:6.7px;color:#4f5968;font-weight:normal;font-family:'Liberation Sans'">13:21</div>
<div class="a" style="left:1116.86px;top:290.53px;font-size:6.7px;line-height:6.7px;color:#4f5968;font-weight:normal;font-family:'Liberation Sans'">13:22</div>
<div class="a" style="left:1146.77px;top:290.53px;font-size:6.7px;line-height:6.7px;color:#4f5968;font-weight:normal;font-family:'Liberation Sans'">13:23</div>
<div class="a" style="left:1176.69px;top:290.53px;font-size:6.7px;line-height:6.7px;color:#4f5968;font-weight:normal;font-family:'Liberation Sans'">13:24</div>
<div class="a" style="left:1206.61px;top:290.53px;font-size:6.7px;line-height:6.7px;color:#4f5968;font-weight:normal;font-family:'Liberation Sans'">13:25</div>
<div class="a" style="left:1236.52px;top:290.53px;font-size:6.7px;line-height:6.7px;color:#4f5968;font-weight:normal;font-family:'Liberation Sans'">13:26</div>
<div class="a" style="left:1266.44px;top:290.53px;font-size:6.7px;line-height:6.7px;color:#4f5968;font-weight:normal;font-family:'Liberation Sans'">13:27</div>
<div class="a" style="left:1296.36px;top:290.53px;font-size:6.7px;line-height:6.7px;color:#4f5968;font-weight:normal;font-family:'Liberation Sans'">13:28</div>
<div class="a" style="left:1326.27px;top:290.53px;font-size:6.7px;line-height:6.7px;color:#4f5968;font-weight:normal;font-family:'Liberation Sans'">13:29</div>
<div class="a" style="left:1356.19px;top:290.53px;font-size:6.7px;line-height:6.7px;color:#4f5968;font-weight:normal;font-family:'Liberation Sans'">13:30</div>
<div class="a" style="left:1386.11px;top:290.53px;font-size:6.7px;line-height:6.7px;color:#4f5968;font-weight:normal;font-family:'Liberation Sans'">13:31</div>
<div class="a" style="left:1416.03px;top:290.53px;font-size:6.7px;line-height:6.7px;color:#4f5968;font-weight:normal;font-family:'Liberation Sans'">13:32</div>
<div class="a" style="left:1445.94px;top:290.53px;font-size:6.7px;line-height:6.7px;color:#4f5968;font-weight:normal;font-family:'Liberation Sans'">13:33</div>
<div class="a" style="left:1475.86px;top:290.53px;font-size:6.7px;line-height:6.7px;color:#4f5968;font-weight:normal;font-family:'Liberation Sans'">13:34</div>
<div class="a" style="left:1505.78px;top:290.53px;font-size:6.7px;line-height:6.7px;color:#4f5968;font-weight:normal;font-family:'Liberation Sans'">13:35</div>
<div class="a" style="left:1535.69px;top:290.53px;font-size:6.7px;line-height:6.7px;color:#4f5968;font-weight:normal;font-family:'Liberation Sans'">13:36</div>
<div class="a" id="t40" style="left:667.54px;top:297.11px;font-size:6.6px;line-height:6.6px;color:#4f5968;font-weight:normal;font-family:'Liberation Sans';transform:scaleX(1.0792);transform-origin:0 0">August 20, 2025</div>
<div class="a" id="t41" style="left:1083.41px;top:310.91px;font-size:7.2px;line-height:7.2px;color:#343741;font-weight:bold;font-family:'Liberation Sans';transform:scaleX(1.1769);transform-origin:0 0">per 60 seconds</div>
<svg class="a" style="left:1593px;top:200.8px;overflow:visible" width="7" height="7" viewBox="0 0 7 7"><circle cx="3.3" cy="3.3" r="2.6" fill="#43bff5"/></svg>
<svg class="a" style="left:1593px;top:215.6px;overflow:visible" width="7" height="7" viewBox="0 0 7 7"><circle cx="3.3" cy="3.3" r="2.6" fill="#1f7aa5"/></svg>
<div class="a" id="t42" style="left:1603.40px;top:200.75px;font-size:8.8px;line-height:8.8px;color:#343741;font-weight:normal;font-family:'Liberation Sans';transform:scaleX(0.9454);transform-origin:0 0">Flow Records</div>
<div class="a" id="t43" style="left:1603.50px;top:214.75px;font-size:8.8px;line-height:8.8px;color:#343741;font-weight:normal;font-family:'Liberation Sans';transform:scaleX(1.0136);transform-origin:0 0">Netflow v9</div>
<div class="a" id="t44" style="left:1658.74px;top:200.75px;font-size:8.8px;line-height:8.8px;color:#343741;font-weight:normal;font-family:'Liberation Sans';transform:scaleX(1.0309);transform-origin:0 0">3.817/s</div>
<div class="a" id="t45" style="left:1658.43px;top:214.75px;font-size:8.8px;line-height:8.8px;color:#343741;font-weight:normal;font-family:'Liberation Sans';transform:scaleX(1.0297);transform-origin:0 0">3.817/s</div>
<div class="a" style="left:1613.00px;top:322.00px;width:70.00px;height:2.00px;background:#fff"></div>
<svg class="a" style="left:1612.7px;top:301.8px" width="71" height="22"><path d="M.5 21.5 V.5 H69.8 V21.5" fill="#fff" stroke="#7d8bab" stroke-width="1" stroke-dasharray="2.4 3.6"/></svg>
<svg class="a" style="left:1620px;top:310px;overflow:visible" width="9" height="8" viewBox="0 0 9 8"><path d="M.5 .5H7.5M1.7 3H6.3M2.8 5.5H5.2" stroke="#1d2a3e" stroke-width="1"/></svg>
<div class="a" style="left:1632.70px;top:304.50px;width:15.00px;height:15.10px;background:#f1f4fa;border-radius:3px"></div>
<svg class="a" style="left:1635.5px;top:307.5px;overflow:visible" width="10" height="10" viewBox="0 0 10 10"><path d="M1.3 8.6 L1.6 6.6 L6.6 1.6 Q7.3 .9 8 1.6 L8.4 2 Q9.1 2.7 8.4 3.4 L3.4 8.4 Z" fill="none" stroke="#1d2a3e" stroke-width=".9"/><path d="M1 9.6H8" stroke="#98a2b3" stroke-width=".7"/></svg>
<svg class="a" style="left:1651px;top:307.5px;overflow:visible" width="11" height="11" viewBox="0 0 11 11"><circle cx="5.3" cy="5.3" r="1.7" fill="none" stroke="#1d2a3e" stroke-width=".9"/><path d="M4.4 .6H6.2L6.6 2 7.9 2.7 9.3 2.2 10.2 3.8 9.2 4.8V5.9L10.2 6.9 9.3 8.5 7.9 8 6.6 8.7 6.2 10.1H4.4L4 8.7 2.7 8 1.3 8.5.4 6.9 1.4 5.9V4.8L.4 3.8 1.3 2.2 2.7 2.7 4 2Z" fill="none" stroke="#1d2a3e" stroke-width=".9" stroke-linejoin="round"/></svg>
<svg class="a" style="left:1670px;top:305.7px;overflow:visible" width="5" height="14" viewBox="0 0 5 14"><rect x="1.5" y="2.5" width="2" height="2" fill="none" stroke="#1d2a3e" stroke-width="1"/><rect x="1.5" y="6.5" width="2" height="2" fill="none" stroke="#1d2a3e" stroke-width="1"/><rect x="1.5" y="10.5" width="2" height="2" fill="none" stroke="#1d2a3e" stroke-width="1"/></svg>
<div class="a" id="t46" style="left:6.13px;top:335.73px;font-size:9.3px;line-height:9.3px;color:#07101f;font-weight:normal;font-family:'Liberation Sans';transform:scaleX(1.0414);transform-origin:0 0"><b>11,150</b> documents</div>
<div class="a" style="left:1450.00px;top:329.00px;width:78.00px;height:21.00px;background:#fff;border:1px solid #e3e8f2;border-radius:3px"></div>
<svg class="a" style="left:1456px;top:334px;overflow:visible" width="12" height="11" viewBox="0 0 12 11"><rect x=".5" y=".5" width="10" height="9.6" rx="1" fill="none" stroke="#1d2a3e" stroke-width="1"/><path d="M.5 2.5H10.5" stroke="#1d2a3e" stroke-width="1"/><path d="M2 4.5H3M4 4.5H9M2 6.5H3M4 6.5H9M2 8.5H3M4 8.5H9" stroke="#1d2a3e" stroke-width="1"/></svg>
<div class="a" id="t47" style="left:1472.03px;top:336.15px;font-size:8.8px;line-height:8.8px;color:#1d2a3e;font-weight:normal;font-family:'Liberation Sans';transform:scaleX(0.9456);transform-origin:0 0;-webkit-text-stroke:0.3px #1d2a3e">Columns</div>
<div class="a" style="left:1511.00px;top:335.00px;width:10.00px;height:10.00px;background:#e3e8f2;border-radius:2px"></div>
<div class="a" style="left:1513.50px;top:335.98px;font-size:9px;line-height:9px;color:#1d2a3e;font-weight:normal;font-family:'Liberation Sans';-webkit-text-stroke:0.25px #1d2a3e">8</div>
<div class="a" style="left:1533.00px;top:329.00px;width:155.00px;height:21.00px;background:#fff;border:1px solid #e3e8f2;border-radius:3px"></div>
<div class="a" style="left:1644.00px;top:330.00px;width:1.00px;height:19.00px;background:#e3e8f2"></div>
<div class="a" style="left:1666.00px;top:330.00px;width:1.00px;height:19.00px;background:#e3e8f2"></div>
<div class="a" style="left:1621.00px;top:330.00px;width:1.00px;height:19.00px;background:#e3e8f2"></div>
<svg class="a" style="left:1539.5px;top:334px;overflow:visible" width="10" height="12" viewBox="0 0 10 12"><path d="M4.5 1V10M1.8 3.2L4.5 .8 7.2 3.2M1.8 7.8L4.5 10.2 7.2 7.8" fill="none" stroke="#1d2a3e" stroke-width=".9"/></svg>
<div class="a" id="t48" style="left:1555.13px;top:336.15px;font-size:8.8px;line-height:8.8px;color:#1d2a3e;font-weight:normal;font-family:'Liberation Sans';transform:scaleX(0.9978);transform-origin:0 0;-webkit-text-stroke:0.3px #1d2a3e">Sort fields</div>
<div class="a" style="left:1600.00px;top:334.00px;width:12.00px;height:11.00px;background:#e3e8f2;border-radius:2px"></div>
<div class="a" style="left:1603.20px;top:335.98px;font-size:9px;line-height:9px;color:#1d2a3e;font-weight:normal;font-family:'Liberation Sans';-webkit-text-stroke:0.25px #1d2a3e">1</div>
<svg class="a" style="left:1629.5px;top:333px;overflow:visible" width="11" height="12" viewBox="0 0 11 12"><circle cx="4.6" cy="4.8" r="3.9" fill="none" stroke="#1d2a3e" stroke-width=".9"/><path d="M7.5 7.7L10 10.2" stroke="#1d2a3e" stroke-width="1.2"/></svg>
<svg class="a" style="left:1649.5px;top:335.5px;overflow:visible" width="12" height="9" viewBox="0 0 12 9"><rect x=".7" y=".7" width="10.4" height="7.2" fill="none" stroke="#1d2a3e" stroke-width="1"/><path d="M2.5 6.3H8M8.8 3V6.5" stroke="#1d2a3e" stroke-width=".8"/></svg>
<svg class="a" style="left:1671.5px;top:335.5px;overflow:visible" width="12" height="9" viewBox="0 0 12 9"><path d="M1 2.3H10.5M1 6.3H10.5" stroke="#1d2a3e" stroke-width=".8"/><circle cx="7.2" cy="2.3" r="1.5" fill="#fff" stroke="#1d2a3e" stroke-width=".8"/><circle cx="3.8" cy="6.4" r="1.5" fill="#fff" stroke="#1d2a3e" stroke-width=".8"/></svg>
<div class="a" style="left:4.00px;top:357.00px;width:10.00px;height:11.00px;background:#fff;border:1px solid #7688ad;border-radius:2px"></div>
<div class="a" id="t49" style="left:36.94px;top:358.17px;font-size:9.6px;line-height:9.6px;color:#07101f;font-weight:bold;font-family:'Liberation Sans';transform:scaleX(0.9946);transform-origin:0 0">@timestamp</div>
<svg class="a" style="left:96.5px;top:356.5px;overflow:visible" width="11" height="11" viewBox="0 0 11 11"><circle cx="5.3" cy="5.5" r="4.4" fill="none" stroke="#1d2a3e" stroke-width=".9"/><path d="M5.3 2.8V5.6H7.6" fill="none" stroke="#1d2a3e" stroke-width=".9"/></svg>
<svg class="a" style="left:161px;top:356px;overflow:visible" width="9" height="12" viewBox="0 0 9 12"><path d="M4.3 .8V10.6M1 7.3L4.3 10.6 7.6 7.3" fill="none" stroke="#1d2a3e" stroke-width=".9"/></svg>
<div class="a" style="left:178.00px;top:357.00px;width:11.00px;height:11.00px;background:#f0f6ff;border:1px solid #a6cbfa;border-radius:2px"></div>
<div class="a" style="left:181.40px;top:358.81px;font-size:7.2px;line-height:7.2px;color:#3567c4;font-weight:normal;font-family:'Liberation Sans';font-style:italic">k</div>
<div class="a" id="t50" style="left:192.20px;top:357.87px;font-size:9.6px;line-height:9.6px;color:#07101f;font-weight:bold;font-family:'Liberation Sans';transform:scaleX(0.9955);transform-origin:0 0">flow.conversation.id</div>
<div class="a" style="left:395.00px;top:357.00px;width:11.00px;height:11.00px;background:#f0f6ff;border:1px solid #a6cbfa;border-radius:2px"></div>
<div class="a" style="left:398.40px;top:358.81px;font-size:7.2px;line-height:7.2px;color:#3567c4;font-weight:normal;font-family:'Liberation Sans';font-style:italic">k</div>
<div class="a" id="t51" style="left:408.69px;top:357.87px;font-size:9.6px;line-height:9.6px;color:#07101f;font-weight:bold;font-family:'Liberation Sans';transform:scaleX(1.0022);transform-origin:0 0">flow.export.host.name</div>
<div class="a" style="left:612.00px;top:357.00px;width:11.00px;height:11.00px;background:#f0f6ff;border:1px solid #a6cbfa;border-radius:2px"></div>
<div class="a" style="left:615.40px;top:358.81px;font-size:7.2px;line-height:7.2px;color:#3567c4;font-weight:normal;font-family:'Liberation Sans';font-style:italic">k</div>
<div class="a" id="t52" style="left:625.21px;top:357.87px;font-size:9.6px;line-height:9.6px;color:#07101f;font-weight:bold;font-family:'Liberation Sans';transform:scaleX(1.0054);transform-origin:0 0">flow.client.host.name</div>
<div class="a" style="left:829.00px;top:357.00px;width:11.00px;height:11.00px;background:#f0f6ff;border:1px solid #a6cbfa;border-radius:2px"></div>
<div class="a" style="left:832.40px;top:358.81px;font-size:7.2px;line-height:7.2px;color:#3567c4;font-weight:normal;font-family:'Liberation Sans';font-style:italic">k</div>
<div class="a" id="t53" style="left:842.30px;top:357.87px;font-size:9.6px;line-height:9.6px;color:#07101f;font-weight:bold;font-family:'Liberation Sans';transform:scaleX(1.0148);transform-origin:0 0">flow.server.host.name</div>
<div class="a" style="left:1047.00px;top:357.00px;width:11.00px;height:11.00px;background:#f0f6ff;border:1px solid #a6cbfa;border-radius:2px"></div>
<div class="a" style="left:1050.40px;top:358.81px;font-size:7.2px;line-height:7.2px;color:#3567c4;font-weight:normal;font-family:'Liberation Sans';font-style:italic">k</div>
<div class="a" id="t54" style="left:1059.30px;top:357.87px;font-size:9.6px;line-height:9.6px;color:#07101f;font-weight:bold;font-family:'Liberation Sans';transform:scaleX(1.0218);transform-origin:0 0">flow.server.l4.port.name</div>
<div class="a" style="left:1412.00px;top:357.00px;width:11.00px;height:11.00px;background:#effaf9;border:1px solid #74d6d0;border-radius:2px"></div>
<svg class="a" style="left:1412px;top:357px;overflow:visible" width="11" height="11" viewBox="0 0 11 11"><path d="M5.3 3 L4.3 8.2 M7.1 3 L6.1 8.2 M3.6 4.6 H7.9 M3.2 6.6 H7.5" stroke="#1a8a7d" stroke-width=".95"/></svg>
<div class="a" id="t55" style="left:1425.60px;top:357.87px;font-size:9.6px;line-height:9.6px;color:#07101f;font-weight:bold;font-family:'Liberation Sans';transform:scaleX(1.0077);transform-origin:0 0">flow.bytes</div>
<div class="a" style="left:1618.00px;top:357.00px;width:11.00px;height:11.00px;background:#effaf9;border:1px solid #74d6d0;border-radius:2px"></div>
<svg class="a" style="left:1618px;top:357px;overflow:visible" width="11" height="11" viewBox="0 0 11 11"><path d="M5.3 3 L4.3 8.2 M7.1 3 L6.1 8.2 M3.6 4.6 H7.9 M3.2 6.6 H7.5" stroke="#1a8a7d" stroke-width=".95"/></svg>
<div class="a" id="t56" style="left:1631.81px;top:357.87px;font-size:9.6px;line-height:9.6px;color:#07101f;font-weight:bold;font-family:'Liberation Sans';transform:scaleX(1.0089);transform-origin:0 0">flow.packets</div>
<div class="a" style="left:1.00px;top:373.00px;width:1692.00px;height:1.00px;background:#e3e8f2"></div>
<div class="a" style="left:1.00px;top:395.00px;width:1692.00px;height:1.00px;background:#e3e8f2"></div>
<div class="a" style="left:4.00px;top:380.00px;width:10.00px;height:11.00px;background:#fff;border:1px solid #7688ad;border-radius:2px"></div>
<svg class="a" style="left:20.5px;top:382px;overflow:visible" width="9" height="9" viewBox="0 0 9 9"><path d="M1.6 7.4L7.4 1.6" stroke="#4a5a75" stroke-width=".8"/><path d="M8.2 .8L5.2 1.3 7.7 3.8Z M.8 8.2L1.3 5.2 3.8 7.7Z" fill="#4a5a75"/></svg>
<div class="a" style="left:37.3px;top:381.70px;width:136.5px;overflow:hidden;font-family:'Liberation Mono';font-size:9.3px;line-height:10px;color:#07101f">Aug 20, 2025 @ 13:07:33.2</div>
<div class="a" style="left:178.8px;top:381.70px;font-family:'Liberation Mono';font-size:9.3px;line-height:10px;color:#07101f">1:4kUL5x7IzShz5QerT+wKImaynmM=</div>
<div class="a" style="left:396px;top:381.70px;font-family:'Liberation Mono';font-size:9.3px;line-height:10px;color:#07101f">_gateway</div>
<div class="a" style="left:612.3px;top:381.70px;font-family:'Liberation Mono';font-size:9.3px;line-height:10px;color:#07101f">192.168.1.145</div>
<div class="a" style="left:829.8px;top:381.70px;font-family:'Liberation Mono';font-size:9.3px;line-height:10px;color:#07101f">ec2-52-88-55-201.us-west-2.compute.ama</div>
<div class="a" style="left:1046.2px;top:381.70px;font-family:'Liberation Mono';font-size:9.3px;line-height:10px;color:#07101f">UDP/9930</div>
<div class="a" style="left:1372.2px;top:381.70px;width:100px;text-align:right;font-family:'Liberation Mono';font-size:9.3px;line-height:10px;color:#07101f">100B</div>
<div class="a" style="left:1588.8px;top:381.70px;width:100px;text-align:right;font-family:'Liberation Mono';font-size:9.3px;line-height:10px;color:#07101f">1</div>
<div class="a" style="left:1.00px;top:396.00px;width:1692.00px;height:22.00px;background:#f6f9fc"></div>
<div class="a" style="left:1.00px;top:418.00px;width:1692.00px;height:1.00px;background:#e3e8f2"></div>
<div class="a" style="left:4.00px;top:403.00px;width:10.00px;height:11.00px;background:#fff;border:1px solid #7688ad;border-radius:2px"></div>
<svg class="a" style="left:20.5px;top:405px;overflow:visible" width="9" height="9" viewBox="0 0 9 9"><path d="M1.6 7.4L7.4 1.6" stroke="#4a5a75" stroke-width=".8"/><path d="M8.2 .8L5.2 1.3 7.7 3.8Z M.8 8.2L1.3 5.2 3.8 7.7Z" fill="#4a5a75"/></svg>
<div class="a" style="left:37.3px;top:404.28px;width:136.5px;overflow:hidden;font-family:'Liberation Mono';font-size:9.3px;line-height:10px;color:#07101f">Aug 20, 2025 @ 13:07:42.7</div>
<div class="a" style="left:178.8px;top:404.28px;font-family:'Liberation Mono';font-size:9.3px;line-height:10px;color:#07101f">1:4kUL5x7IzShz5QerT+wKImaynmM=</div>
<div class="a" style="left:396px;top:404.28px;font-family:'Liberation Mono';font-size:9.3px;line-height:10px;color:#07101f">_gateway</div>
<div class="a" style="left:612.3px;top:404.28px;font-family:'Liberation Mono';font-size:9.3px;line-height:10px;color:#07101f">192.168.1.145</div>
<div class="a" style="left:829.8px;top:404.28px;font-family:'Liberation Mono';font-size:9.3px;line-height:10px;color:#07101f">ec2-52-88-55-201.us-west-2.compute.ama</div>
<div class="a" style="left:1046.2px;top:404.28px;font-family:'Liberation Mono';font-size:9.3px;line-height:10px;color:#07101f">UDP/9930</div>
<div class="a" style="left:1372.2px;top:404.28px;width:100px;text-align:right;font-family:'Liberation Mono';font-size:9.3px;line-height:10px;color:#07101f">100B</div>
<div class="a" style="left:1588.8px;top:404.28px;width:100px;text-align:right;font-family:'Liberation Mono';font-size:9.3px;line-height:10px;color:#07101f">1</div>
<div class="a" style="left:1.00px;top:441.00px;width:1692.00px;height:1.00px;background:#e3e8f2"></div>
<div class="a" style="left:4.00px;top:425.00px;width:10.00px;height:11.00px;background:#fff;border:1px solid #7688ad;border-radius:2px"></div>
<svg class="a" style="left:20.5px;top:427px;overflow:visible" width="9" height="9" viewBox="0 0 9 9"><path d="M1.6 7.4L7.4 1.6" stroke="#4a5a75" stroke-width=".8"/><path d="M8.2 .8L5.2 1.3 7.7 3.8Z M.8 8.2L1.3 5.2 3.8 7.7Z" fill="#4a5a75"/></svg>
<div class="a" style="left:37.3px;top:426.86px;width:136.5px;overflow:hidden;font-family:'Liberation Mono';font-size:9.3px;line-height:10px;color:#07101f">Aug 20, 2025 @ 13:07:57.3</div>
<div class="a" style="left:178.8px;top:426.86px;font-family:'Liberation Mono';font-size:9.3px;line-height:10px;color:#07101f">1:4kUL5x7IzShz5QerT+wKImaynmM=</div>
<div class="a" style="left:396px;top:426.86px;font-family:'Liberation Mono';font-size:9.3px;line-height:10px;color:#07101f">_gateway</div>
<div class="a" style="left:612.3px;top:426.86px;font-family:'Liberation Mono';font-size:9.3px;line-height:10px;color:#07101f">192.168.1.145</div>
<div class="a" style="left:829.8px;top:426.86px;font-family:'Liberation Mono';font-size:9.3px;line-height:10px;color:#07101f">ec2-52-88-55-201.us-west-2.compute.ama</div>
<div class="a" style="left:1046.2px;top:426.86px;font-family:'Liberation Mono';font-size:9.3px;line-height:10px;color:#07101f">UDP/9930</div>
<div class="a" style="left:1372.2px;top:426.86px;width:100px;text-align:right;font-family:'Liberation Mono';font-size:9.3px;line-height:10px;color:#07101f">100B</div>
<div class="a" style="left:1588.8px;top:426.86px;width:100px;text-align:right;font-family:'Liberation Mono';font-size:9.3px;line-height:10px;color:#07101f">1</div>
<div class="a" style="left:1.00px;top:442.00px;width:1692.00px;height:21.00px;background:#f6f9fc"></div>
<div class="a" style="left:1.00px;top:463.00px;width:1692.00px;height:1.00px;background:#e3e8f2"></div>
<div class="a" style="left:4.00px;top:448.00px;width:10.00px;height:11.00px;background:#fff;border:1px solid #7688ad;border-radius:2px"></div>
<svg class="a" style="left:20.5px;top:450px;overflow:visible" width="9" height="9" viewBox="0 0 9 9"><path d="M1.6 7.4L7.4 1.6" stroke="#4a5a75" stroke-width=".8"/><path d="M8.2 .8L5.2 1.3 7.7 3.8Z M.8 8.2L1.3 5.2 3.8 7.7Z" fill="#4a5a75"/></svg>
<div class="a" style="left:37.3px;top:449.44px;width:136.5px;overflow:hidden;font-family:'Liberation Mono';font-size:9.3px;line-height:10px;color:#07101f">Aug 20, 2025 @ 13:07:59.6</div>
<div class="a" style="left:178.8px;top:449.44px;font-family:'Liberation Mono';font-size:9.3px;line-height:10px;color:#07101f">1:4kUL5x7IzShz5QerT+wKImaynmM=</div>
<div class="a" style="left:396px;top:449.44px;font-family:'Liberation Mono';font-size:9.3px;line-height:10px;color:#07101f">_gateway</div>
<div class="a" style="left:612.3px;top:449.44px;font-family:'Liberation Mono';font-size:9.3px;line-height:10px;color:#07101f">192.168.1.145</div>
<div class="a" style="left:829.8px;top:449.44px;font-family:'Liberation Mono';font-size:9.3px;line-height:10px;color:#07101f">ec2-52-88-55-201.us-west-2.compute.ama</div>
<div class="a" style="left:1046.2px;top:449.44px;font-family:'Liberation Mono';font-size:9.3px;line-height:10px;color:#07101f">UDP/9930</div>
<div class="a" style="left:1372.2px;top:449.44px;width:100px;text-align:right;font-family:'Liberation Mono';font-size:9.3px;line-height:10px;color:#07101f">100B</div>
<div class="a" style="left:1588.8px;top:449.44px;width:100px;text-align:right;font-family:'Liberation Mono';font-size:9.3px;line-height:10px;color:#07101f">1</div>
<div class="a" style="left:1.00px;top:486.00px;width:1692.00px;height:1.00px;background:#e3e8f2"></div>
<div class="a" style="left:4.00px;top:470.00px;width:10.00px;height:11.00px;background:#fff;border:1px solid #7688ad;border-radius:2px"></div>
<svg class="a" style="left:20.5px;top:472px;overflow:visible" width="9" height="9" viewBox="0 0 9 9"><path d="M1.6 7.4L7.4 1.6" stroke="#4a5a75" stroke-width=".8"/><path d="M8.2 .8L5.2 1.3 7.7 3.8Z M.8 8.2L1.3 5.2 3.8 7.7Z" fill="#4a5a75"/></svg>
<div class="a" style="left:37.3px;top:472.02px;width:136.5px;overflow:hidden;font-family:'Liberation Mono';font-size:9.3px;line-height:10px;color:#07101f">Aug 20, 2025 @ 13:08:44.6</div>
<div class="a" style="left:178.8px;top:472.02px;font-family:'Liberation Mono';font-size:9.3px;line-height:10px;color:#07101f">1:4kUL5x7IzShz5QerT+wKImaynmM=</div>
<div class="a" style="left:396px;top:472.02px;font-family:'Liberation Mono';font-size:9.3px;line-height:10px;color:#07101f">_gateway</div>
<div class="a" style="left:612.3px;top:472.02px;font-family:'Liberation Mono';font-size:9.3px;line-height:10px;color:#07101f">192.168.1.145</div>
<div class="a" style="left:829.8px;top:472.02px;font-family:'Liberation Mono';font-size:9.3px;line-height:10px;color:#07101f">ec2-52-88-55-201.us-west-2.compute.ama</div>
<div class="a" style="left:1046.2px;top:472.02px;font-family:'Liberation Mono';font-size:9.3px;line-height:10px;color:#07101f">UDP/9930</div>
<div class="a" style="left:1372.2px;top:472.02px;width:100px;text-align:right;font-family:'Liberation Mono';font-size:9.3px;line-height:10px;color:#07101f">100B</div>
<div class="a" style="left:1588.8px;top:472.02px;width:100px;text-align:right;font-family:'Liberation Mono';font-size:9.3px;line-height:10px;color:#07101f">1</div>
<div class="a" style="left:1579.00px;top:271.00px;width:105.00px;height:24.00px;background:#07101f;border-radius:4px;box-shadow:0 1px 3px rgba(0,0,0,.18)"></div>
<svg class="a" style="left:1632px;top:294px;overflow:visible" width="14" height="6" viewBox="0 0 14 6"><path d="M0 0 L7 6.5 L14 0Z" fill="#07101f"/></svg>
<div class="a" id="t57" style="left:1583.52px;top:279.10px;font-size:9.8px;line-height:9.8px;color:#fff;font-weight:normal;font-family:'Liberation Sans';transform:scaleX(1.0201);transform-origin:0 0;-webkit-text-stroke:0.25px #fff">Edit Discover session</div>
<svg class="a" style="left:0px;top:0px;overflow:visible" width="1694" height="487" viewBox="0 0 1694 487"><defs><filter id="sh" x="-20%" y="-20%" width="140%" height="140%"><feDropShadow dx="0.4" dy="0.9" stdDeviation="0.8" flood-color="#000" flood-opacity="0.42"/></filter></defs><path d="M1541.2 434.2 Q1539.9 433.6 1540.8 432.3 L1609.6 341.2 L1600.6 336.1 L1636.3 321 L1627.1 358.2 L1621.7 351.2 L1543.3 434 Q1542.4 434.9 1541.2 434.2Z" fill="#fff200" filter="url(#sh)"/></svg>
<div class="a" style="left:0.00px;top:3.00px;width:1.00px;height:484.00px;background:#d9d9dd"></div>
<div class="a" style="left:1693.00px;top:3.00px;width:1.00px;height:484.00px;background:#f3f3f5"></div>
</body></html>
